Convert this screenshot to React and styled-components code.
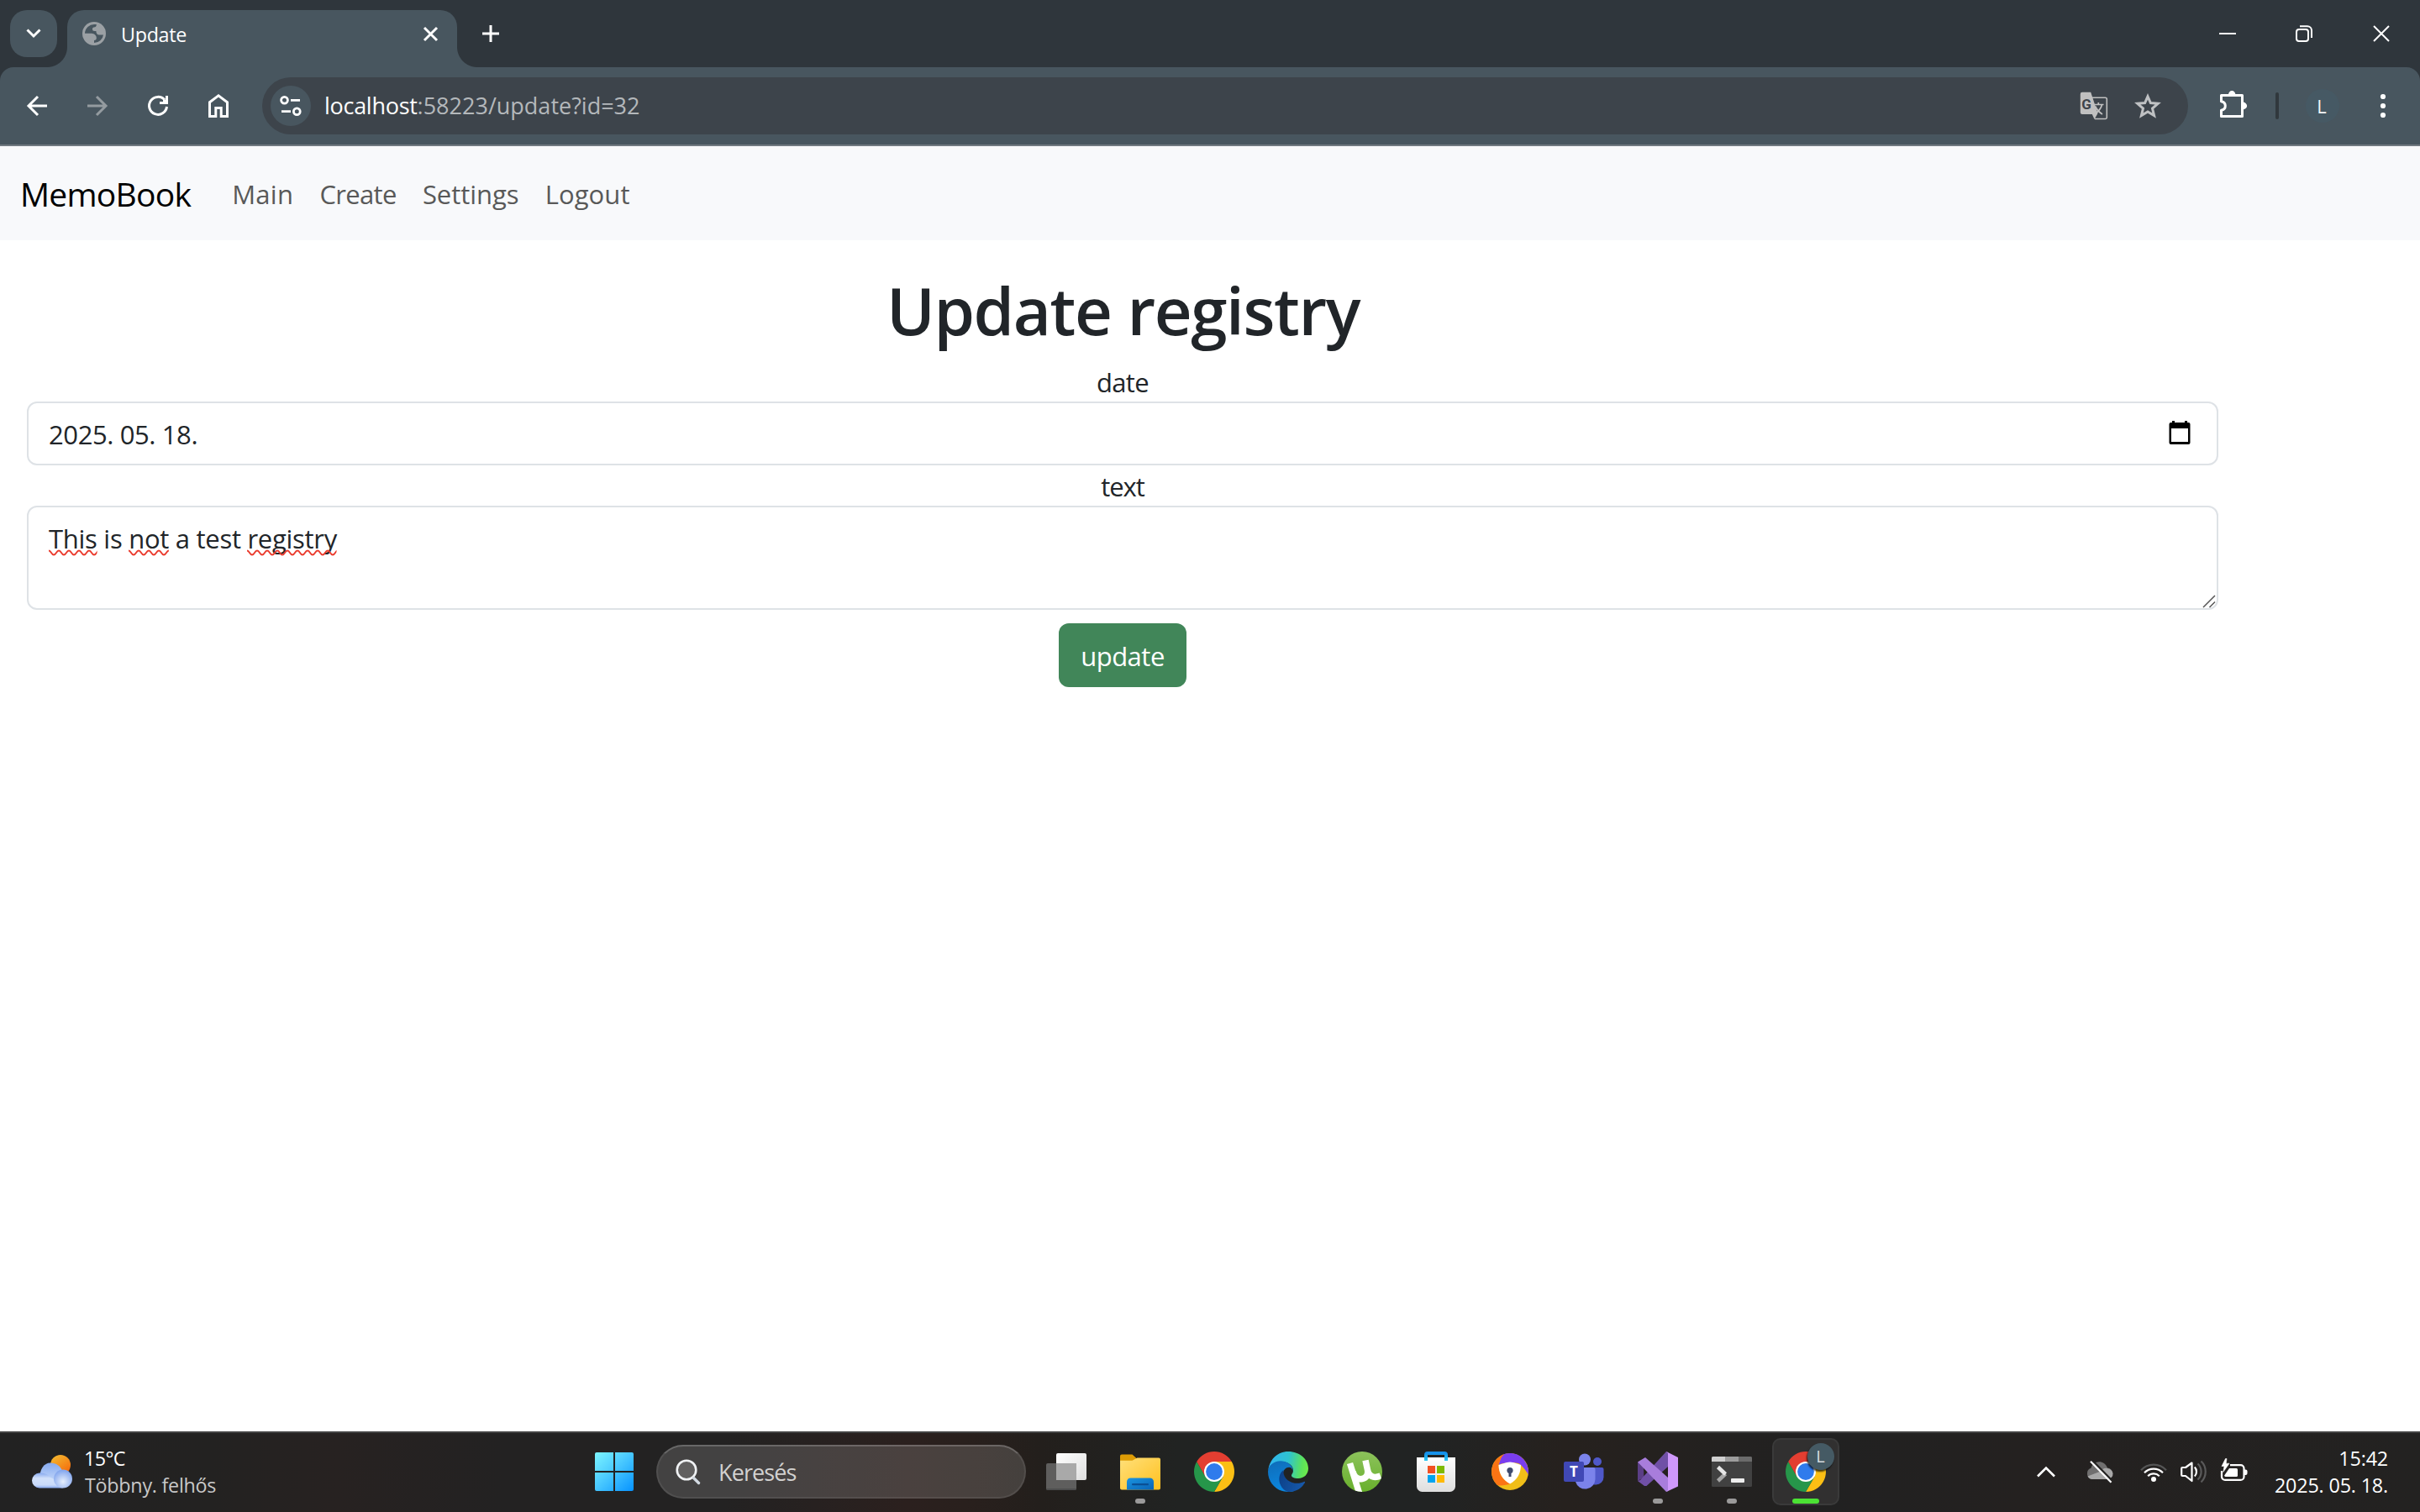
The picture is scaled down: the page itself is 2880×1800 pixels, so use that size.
import React, { useId } from 'react';
import styled, { createGlobalStyle } from 'styled-components';

const GlobalStyle = createGlobalStyle`
  *, *::before, *::after { box-sizing: border-box; }
  html, body { margin: 0; padding: 0; background: #fff; }
  body { font-family: "Open Sans", "Noto Sans", sans-serif; overflow: hidden; }
  svg { display: block; flex: none; overflow: visible; }
  button { font: inherit; border: 0; padding: 0; margin: 0; background: none; color: inherit; }
`;

const Screen = styled.div`
  width: 2880px;
  height: 1800px;
  display: flex;
  flex-direction: column;
  overflow: hidden;
  background: #fff;
`;

/* ---------- browser frame ---------- */

const BrowserFrame = styled.header`
  background: #2f363c;
  flex: none;
`;

const TabStrip = styled.div`
  height: 80px;
  display: flex;
  padding: 12px 0 0 12px;
  color: #fff;
`;

const TabSearch = styled.button`
  && {
    width: 56px;
    height: 56px;
    border-radius: 20px;
    background: #48565f;
    display: flex;
    align-items: center;
    justify-content: center;
  }
`;

const Tab = styled.div`
  position: relative;
  width: 464px;
  height: 68px;
  margin-left: 12px;
  padding: 0 23px 12px 18px;
  border-radius: 20px 20px 0 0;
  background: #48565f;
  display: flex;
  align-items: center;

  &::before,
  &::after {
    content: '';
    position: absolute;
    bottom: 0;
    width: 24px;
    height: 24px;
  }
  &::before {
    left: -24px;
    background: radial-gradient(circle at 0 0, transparent 23.5px, #48565f 24.5px);
  }
  &::after {
    right: -24px;
    background: radial-gradient(circle at 100% 0, transparent 23.5px, #48565f 24.5px);
  }
`;

const TabTitle = styled.span`
  flex: 1;
  margin-left: 18px;
  font-size: 23.3px;
  letter-spacing: -0.3px;
  line-height: 32px;
  padding-top: 2px;
`;

const NewTab = styled.button`
  && {
    width: 56px;
    height: 56px;
    margin-left: 12px;
    display: flex;
    align-items: center;
    justify-content: center;
  }
`;

const WindowControls = styled.div`
  margin: -12px 0 0 auto;
  height: 80px;
  display: flex;
`;

const WindowButton = styled.button`
  width: ${(p) => p.$width || 92}px;
  display: flex;
  align-items: center;
  justify-content: center;
`;

const Toolbar = styled.div`
  height: 94px;
  border-radius: 16px 16px 0 0;
  border-bottom: 2px solid #707980;
  background: #48565f;
  color: #fff;
  display: flex;
  align-items: center;
  padding-left: 8px;
`;

const ToolButton = styled.button`
  && {
    width: 72px;
    height: 72px;
    display: flex;
    align-items: center;
    justify-content: center;
    color: ${(p) => (p.$disabled ? '#949ba0' : '#fff')};
  }
`;

const Omnibox = styled.div`
  width: 2292px;
  height: 68px;
  margin-left: 16px;
  padding: 0 32px 0 10px;
  border-radius: 34px;
  background: #3d444b;
  display: flex;
  align-items: center;
`;

const SiteInfo = styled.span`
  width: 48px;
  height: 48px;
  border-radius: 50%;
  background: #48565f;
  display: flex;
  align-items: center;
  justify-content: center;
`;

const Address = styled.span`
  flex: 1;
  margin-left: 16px;
  font-size: 27px;
  line-height: 40px;
  color: #b4b8bb;
`;

const Host = styled.span`
  color: #fff;
  letter-spacing: -0.28px;
`;

const OmniActions = styled.div`
  display: flex;
  align-items: center;
  gap: 32px;
`;

const ToolDivider = styled.i`
  width: 4px;
  height: 32px;
  border-radius: 2px;
  background: #30383d;
  margin: 0 32px 0 34px;
`;

const Avatar = styled.span`
  width: 40px;
  height: 40px;
  padding-right: 2px;
  border-radius: 50%;
  background: #465964;
  color: #f4f6f7;
  font-size: 22px;
  display: flex;
  align-items: center;
  justify-content: center;
`;

const ChromeActions = styled.div`
  display: flex;
  align-items: center;
  margin-left: 38px;
`;

const ExtensionsButton = styled.span`
  padding-bottom: 4px;
`;

const MenuButton = styled.button`
  && { margin-left: 49px; }
`;

/* ---------- page ---------- */

const Navbar = styled.nav`
  height: 112px;
  flex: none;
  padding: 2px 0 0 24px;
  background: #f8f9fb;
  display: flex;
  align-items: center;
`;

const Brand = styled.a`
  font-size: 39px;
  letter-spacing: -0.75px;
  line-height: 60px;
  color: #000;
  margin-right: 49px;
`;

const NavLinks = styled.div`
  display: flex;
  gap: 31.2px;
`;

const NavLink = styled.a`
  font-size: 31px;
  line-height: 48px;
  letter-spacing: ${(p) => p.$tracking}px;
  color: #595959;
`;

const Page = styled.main`
  flex: 1;
  min-height: 0;
  padding: 32px 240px 0 32px;
  display: flex;
  flex-direction: column;
  align-items: center;
  color: #212529;
`;

const Title = styled.h1`
  margin: 0 0 13px;
  padding: 3px 0 0 1px;
  font-size: 78px;
  font-weight: 600;
  line-height: 96px;
  letter-spacing: -1.4px;
`;

const Label = styled.label`
  padding-top: 1px;
  height: 48px;
  font-size: 31px;
  line-height: 48px;
  letter-spacing: ${(p) => p.$tracking}px;
`;

const Field = styled.div`
  position: relative;
  width: 100%;
  height: ${(p) => p.$height}px;
  padding: 13px 24px 0;
  border: 2px solid #dee2e6;
  border-radius: 12px;
  background: #fff;
  display: flex;
  justify-content: space-between;
  align-items: flex-start;
  font-size: 31px;
  line-height: 48px;
  letter-spacing: ${(p) => p.$tracking}px;
`;

const CalendarSlot = styled.span`
  padding: 8px 7px 0 0;
`;

const Word = styled.span`
  position: relative;
  display: inline-block;
`;

const Squiggle = styled.svg`
  position: absolute;
  left: 0;
  top: 37px;
`;

const ResizeHandle = styled.svg`
  position: absolute;
  right: 2px;
  bottom: 1px;
`;

const SubmitButton = styled.button`
  && {
    width: 152px;
    height: 76px;
    margin-top: 16px;
    padding-top: 1px;
    border-radius: 12px;
    background: #418659;
    color: #fff;
    font-size: 31px;
    line-height: 48px;
    letter-spacing: -0.5px;
  }
`;

/* ---------- taskbar ---------- */

const Taskbar = styled.footer`
  height: 96px;
  flex: none;
  padding-bottom: 2px;
  border-top: 2px solid #434343;
  background: linear-gradient(90deg, #222222 0, #232221 250px, #272221 400px, #232222 600px, #232222 860px, #2b201e 1080px, #29201d 1150px, #231f1c 1240px, #212322 1400px, #212323 1700px, #26211e 1860px, #212121 2180px, #242120 2400px, #232221 2880px);
  display: flex;
  align-items: center;
  color: #fff;
  font-size: 23.3px;
  line-height: 32px;
`;

const Weather = styled.div`
  width: 708px;
  padding-left: 38px;
  display: flex;
  align-items: center;
`;

const WeatherText = styled.div`
  display: flex;
  flex-direction: column;
  margin: 0 0 0 14px;
`;

const Temperature = styled.span`
  letter-spacing: -0.6px;
`;

const Condition = styled.span`
  margin-left: 1px;
  letter-spacing: -0.25px;
  color: #c8c8c8;
`;

const SearchBox = styled.div`
  width: 440px;
  height: 64px;
  margin: 0 4px 0 27px;
  padding-left: 21px;
  border: 2px solid rgba(255, 255, 255, 0.07);
  border-top-color: rgba(255, 255, 255, 0.2);
  border-radius: 32px;
  background: rgba(255, 255, 255, 0.15);
  display: flex;
  align-items: center;
  gap: 21px;
  font-size: 27px;
  letter-spacing: -0.9px;
  color: #d2d1d0;
`;

const SearchLabel = styled.span`
  padding-top: 2px;
`;

const AppList = styled.div`
  display: flex;
`;

const AppCell = styled.div`
  position: relative;
  width: 88px;
  height: 92px;
  display: flex;
  align-items: center;
  justify-content: center;
`;

const ActiveTile = styled.div`
  width: 80px;
  height: 80px;
  border: 2px solid #3a3a3a;
  border-radius: 10px;
  background: #313030;
  display: flex;
  align-items: center;
  justify-content: center;
`;

const RunMark = styled.i`
  position: absolute;
  bottom: 8px;
  left: 50%;
  transform: translateX(-50%);
  width: ${(p) => (p.$active ? 32 : 12)}px;
  height: 6px;
  border-radius: 3px;
  background: ${(p) => (p.$active ? '#4be234' : '#9b9a9a')};
`;

const Badge = styled.span`
  position: absolute;
  top: 12px;
  right: 10px;
  width: 32px;
  height: 32px;
  padding-right: 1px;
  border-radius: 50%;
  background: #455a64;
  box-shadow: -1px 2px 2px rgba(0, 0, 0, 0.7);
  color: #d5dade;
  font-size: 20px;
  display: flex;
  align-items: center;
  justify-content: center;
`;

const Tray = styled.div`
  flex: 1;
  padding: 0 38px 0 231px;
  display: flex;
  align-items: center;
`;

const TrayIcons = styled.div`
  display: flex;
  align-items: center;
  gap: 16px;
  margin-left: ${(p) => p.$offset}px;
`;

const Clock = styled.div`
  margin: 0 0 0 auto;
  display: flex;
  flex-direction: column;
  align-items: flex-end;
  letter-spacing: -0.15px;
`;

/* ---------- icons ---------- */

const ChevronDown = () => (
  <svg width="18" height="12" viewBox="0 0 18 12" fill="none" stroke="#fff" strokeWidth="3">
    <path d="M1.500 1.500 9 9l7.500-7.500" />
  </svg>
);

const Globe = () => (
  <svg width="28" height="28" viewBox="0 0 28 28">
    <circle cx="14" cy="14" r="14" fill="#9ba0a4" />
    <path
      fill="#48565f"
      d="M3 13.800A11.100 11.100 0 0 1 14.500 3H16.800C16.800 5.600 15.600 6.400 13.800 6.400C12.400 6.600 12 7.600 12 8.800C12 10.400 13 10.900 14.400 10.900H16.400C16.400 13.600 17.600 15.400 20 15.400H25A11.100 11.100 0 0 1 14 25V22C16 22 16.800 20.600 16.800 19.200C16.800 16.200 14.400 14 11 13.800Z"
    />
  </svg>
);

const Cross = ({ size, width }) => (
  <svg width={size} height={size} viewBox={`0 0 ${size} ${size}`} fill="none" stroke="#fff" strokeWidth={width}>
    <path d={`M1 1 ${size - 1} ${size - 1}M${size - 1} 1 1 ${size - 1}`} />
  </svg>
);

const Plus = () => (
  <svg width="20" height="20" viewBox="0 0 20 20" stroke="#fff" strokeWidth="3">
    <path d="M10 0v20M0 10h20" />
  </svg>
);

const Minimise = () => (
  <svg width="20" height="20" viewBox="0 0 20 20" stroke="#fff" strokeWidth="2">
    <path d="M0 10h20" />
  </svg>
);

const Restore = () => (
  <svg width="20" height="20" viewBox="0 0 20 20" fill="none" stroke="#fff" strokeWidth="2">
    <rect x="1" y="5" width="14" height="14" rx="3" />
    <path d="M5 1.200h9a5 5 0 0 1 5 5V15" />
  </svg>
);

const ArrowLeft = ({ flip }) => (
  <svg width="24" height="24" viewBox="0 0 24 24" fill="none" stroke="currentColor" strokeWidth="3">
    <g transform={flip ? 'matrix(-1 0 0 1 24 0)' : undefined}>
      <path d="M24 12H2M13 1 2 12l11 11" />
    </g>
  </svg>
);

const Reload = () => (
  <svg width="24" height="24" viewBox="0 0 24 24" fill="none" stroke="#fff" strokeWidth="3">
    <path d="M20 5A10.500 10.500 0 1 0 22.500 13" />
    <path d="M22.500 0v8.500H14" />
    <path d="M18 5h4v4h-4z" fill="#fff" stroke="none" />
  </svg>
);

const Home = () => (
  <svg width="24" height="28" viewBox="0 0 24 28" fill="none" stroke="#fff" strokeWidth="3">
    <path d="M1.500 9.800 12 1.800l10.500 8V26.500h-7.300V16.500H8.800v10H1.500z" />
  </svg>
);

const Tune = () => (
  <svg width="26" height="26" viewBox="0 0 26 26" fill="none" stroke="#fff" strokeWidth="2.800">
    <circle cx="5.500" cy="6.300" r="3.900" />
    <path d="M13 6.300h11M2 19.700h11" />
    <circle cx="20.300" cy="19.700" r="3.900" />
  </svg>
);

const Translate = () => (
  <svg width="33" height="34" viewBox="0 0 33 34">
    <path d="M14 7.300h16.500a1.800 1.800 0 0 1 1.800 1.800v21.600a1.800 1.800 0 0 1-1.800 1.800H18" fill="none" stroke="#c0c0c0" strokeWidth="1.600" />
    <path d="M3 .8h10.200L21.500 26 17.500 33 14.800 27H3a2.200 2.200 0 0 1-2.200-2.200V3A2.200 2.200 0 0 1 3 .8z" fill="#c0c0c0" />
    <path d="M16.500 15.500H28.500M22.300 13v2.500M26.500 15.500C25.500 20 22 24 18 26.500M18.500 17.500c2 4 4.500 7 8.500 9.500" fill="none" stroke="#c0c0c0" strokeWidth="1.700" />
    <text x="2.300" y="20.500" fontFamily="Roboto, sans-serif" fontWeight="700" fontSize="17" fill="#3d444b">G</text>
  </svg>
);

const Star = () => (
  <svg width="32" height="30" viewBox="0 0 32 30" fill="none" stroke="#bfc1c3" strokeWidth="3">
    <path d="M16 3.800 19.400 11.600 28.200 12.300 21.500 18 23.600 26.600 16 22 8.400 26.600 10.500 18 3.800 12.300 12.600 11.600z" />
  </svg>
);

const Puzzle = () => (
  <svg width="32" height="32" viewBox="0 0 32 32">
    <path
      d="M1.500 30.500V23.300c3-.6 4.800-2.600 4.800-5.300s-1.800-4.700-4.800-5.300V5.500h25v25z"
      fill="none"
      stroke="#fff"
      strokeWidth="3"
      strokeLinejoin="round"
    />
    <path d="M10 5a4.200 5 0 0 1 8.400 0zM27 13.600a5 4.300 0 0 1 0 8.800z" fill="#fff" />
  </svg>
);

const MenuDots = () => (
  <svg width="6" height="28" viewBox="0 0 6 28" fill="#fff">
    <circle cx="3" cy="3" r="3.100" />
    <circle cx="3" cy="14" r="3.100" />
    <circle cx="3" cy="25" r="3.100" />
  </svg>
);

const Calendar = () => (
  <svg width="26" height="28" viewBox="0 0 26 28">
    <path d="M4 0h3v2h12V0h3v2h1.500A2 2 0 0 1 25.500 4v22a2 2 0 0 1-2 2h-21a2 2 0 0 1-2-2V4A2 2 0 0 1 2.500 2H4z" fill="#000" />
    <path d="M3 9h20v16H3z" fill="#fff" />
  </svg>
);

const WeatherIcon = () => (
  <svg width="48" height="40" viewBox="0 0 48 40">
    <defs>
      <linearGradient id="sun" x1="0" y1="0" x2=".7" y2="1">
        <stop offset="0" stopColor="#f3c033" />
        <stop offset="1" stopColor="#f56b0c" />
      </linearGradient>
      <linearGradient id="cloudBack" x1="0" y1="0" x2="0" y2="1">
        <stop offset="0" stopColor="#86aaf0" />
        <stop offset="1" stopColor="#c9dcfa" />
      </linearGradient>
      <radialGradient id="cloudFront" cx=".5" cy=".65" r=".6">
        <stop offset="0" stopColor="#e6effd" />
        <stop offset="1" stopColor="#86a8ee" />
      </radialGradient>
      <linearGradient id="cloudBase" x1="0" y1="0" x2="0" y2="1">
        <stop offset="0" stopColor="#86a8ee" />
        <stop offset=".35" stopColor="#d2e1fa" />
        <stop offset=".8" stopColor="#c9dafa" />
        <stop offset="1" stopColor="#86a8ee" />
      </linearGradient>
    </defs>
    <circle cx="34" cy="12" r="12" fill="url(#sun)" />
    <path d="M9 30C9 17 14 9.500 22 9.500C29 9.500 34 13.500 36 19L38 34H9z" fill="url(#cloudBack)" />
    <path d="M9 39.500a9 9 0 0 1 0-18C14 21.500 18 22.500 21 26L28 30L37 39.500z" fill="url(#cloudBase)" />
    <circle cx="37" cy="28.500" r="11" fill="url(#cloudFront)" />
  </svg>
);

const StartLogo = () => (
  <svg width="46" height="46" viewBox="0 0 46 46">
    <defs>
      <linearGradient id="start" x1="0" y1="0" x2="46" y2="46" gradientUnits="userSpaceOnUse">
        <stop offset="0" stopColor="#7cf5ff" />
        <stop offset=".45" stopColor="#4ccbff" />
        <stop offset="1" stopColor="#0793ff" />
      </linearGradient>
    </defs>
    <path fill="url(#start)" d="M2 0h20v22H0V2a2 2 0 0 1 2-2zM24 0h20a2 2 0 0 1 2 2v20H24zM0 24h22v22H2a2 2 0 0 1-2-2zM24 24h22v20a2 2 0 0 1-2 2H24z" />
  </svg>
);

const SearchIcon = () => (
  <svg width="30" height="32" viewBox="0 0 30 32" fill="none">
    <circle cx="13" cy="14" r="11.300" fill="#616060" stroke="#f0f2f4" strokeWidth="2.600" />
    <path d="m21.500 23.500 6 6" stroke="#d3dae2" strokeWidth="3.400" strokeLinecap="round" />
  </svg>
);

const TaskViewIcon = () => (
  <svg width="48" height="44" viewBox="0 0 48 44">
    <defs>
      <linearGradient id="tv" x1="0" y1="0" x2="1" y2="1">
        <stop offset="0" stopColor="#fff" />
        <stop offset="1" stopColor="#dedede" />
      </linearGradient>
    </defs>
    <rect x="12" y="0" width="36" height="32" rx="2" fill="url(#tv)" />
    <rect x="0" y="12" width="36" height="32" rx="2" fill="#6e6e6e" opacity=".8" />
    <path d="M12 12h24v20H12z" fill="#a9a9a9" />
    <path d="M0 42h36a2 2 0 0 1-2 2H2a2 2 0 0 1-2-2z" fill="#4e4e4e" />
  </svg>
);

const ExplorerIcon = () => (
  <svg width="48" height="44" viewBox="0 0 48 44">
    <defs>
      <linearGradient id="folder" x1="0" y1="0" x2="1" y2="1">
        <stop offset="0" stopColor="#ffe07a" />
        <stop offset="1" stopColor="#ffc01f" />
      </linearGradient>
      <linearGradient id="drawer" x1="0" y1="0" x2="1" y2="1">
        <stop offset="0" stopColor="#1a95e0" />
        <stop offset="1" stopColor="#0a63b5" />
      </linearGradient>
    </defs>
    <path d="M0 3.500A2 2 0 0 1 2 1.500h12.500L20 6.500V16H0z" fill="#dd9c05" />
    <path d="M0 8.800h14.500l6-3.300H46a2 2 0 0 1 2 2V41.500a2 2 0 0 1-2 2H2a2 2 0 0 1-2-2z" fill="url(#folder)" />
    <path d="M8 43.500V34a4.500 4.500 0 0 1 4.500-4.500h23A4.500 4.500 0 0 1 40 34v9.500z" fill="url(#drawer)" />
    <rect x="14" y="36" width="20" height="2.200" rx="1" fill="#0a4f94" />
  </svg>
);

const ChromeIcon = () => (
  <svg width="48" height="48" viewBox="0 0 48 48">
    <path d="M24 12h20.780A24 24 0 0 1 24 48l10.390-18L24 24z" fill="#fbbf14" />
    <path d="M34.390 30 24 48A24 24 0 0 1 3.220 12L13.610 30 24 24z" fill="#26964a" />
    <path d="M13.610 30 3.220 12a24 24 0 0 1 41.560 0H24v12z" fill="#e33e31" />
    <circle cx="24" cy="24" r="12" fill="#fff" />
    <circle cx="24" cy="24" r="9.900" fill="#2f7bec" />
  </svg>
);

const EdgeIcon = () => (
  <svg width="48" height="48" viewBox="0 0 48 48">
    <defs>
      <linearGradient id="edgeTop" x1="0" y1=".3" x2="1" y2=".4">
        <stop offset="0" stopColor="#2fb4f2" />
        <stop offset=".5" stopColor="#2fc3cf" />
        <stop offset=".85" stopColor="#5ae25e" />
        <stop offset="1" stopColor="#6cea4b" />
      </linearGradient>
      <linearGradient id="edgeMid" x1="0" y1="0" x2=".3" y2="1">
        <stop offset="0" stopColor="#0f6cb8" />
        <stop offset="1" stopColor="#0b86de" />
      </linearGradient>
      <linearGradient id="edgeLow" x1="0" y1="0" x2="1" y2=".3">
        <stop offset="0" stopColor="#0b3f86" />
        <stop offset="1" stopColor="#1657a8" />
      </linearGradient>
    </defs>
    <path d="M.3 22C2 9 12 0 24 0c14 0 24 9.500 24 20 0 7-5 12-12 12-5 0-8-1.500-8-3.500 0-1.500 2-2.500 2-6C30 15 22 12 15 12 8 12 2.500 16 .3 22z" fill="url(#edgeTop)" />
    <path d="M29.500 24C30.500 16 22 11.300 15 11.300 7 11.300 0 17 0 24c0 13.500 10.500 24 24 24 3 0 6-.5 8-1.500L20 36 17.500 27.500C18 22 21.500 18.800 25 18.800c2.800 0 4.500 2 4.500 5.200z" fill="url(#edgeMid)" />
    <path d="M18.500 22C10 28 12 44 24 48c10 .5 16.500-5 20-11 .3-1-.4-1.500-1.200-1-10 5-26-1-24.300-14z" fill="url(#edgeLow)" />
  </svg>
);

const TorrentIcon = () => (
  <svg width="48" height="48" viewBox="0 0 48 48">
    <defs>
      <linearGradient id="ut" x1="0" y1="0" x2="0" y2="1">
        <stop offset="0" stopColor="#8cc25b" />
        <stop offset="1" stopColor="#68b02c" />
      </linearGradient>
      <clipPath id="utClip"><circle cx="24" cy="24" r="24" /></clipPath>
    </defs>
    <circle cx="24" cy="24" r="24" fill="url(#ut)" />
    <g clipPath="url(#utClip)">
      <path
        d="M9.500 14 20.500 49M13 24C15 31 19 33.500 24 32.500 29 31.500 31.500 28 30.500 22L28 10.500M30.500 22C31.500 29 37 32.500 46 29"
        fill="none"
        stroke="#fff"
        strokeWidth="7.500"
      />
    </g>
  </svg>
);

const StoreIcon = () => (
  <svg width="48" height="48" viewBox="0 0 48 48">
    <defs>
      <linearGradient id="bag" x1="0" y1="0" x2="0" y2="1">
        <stop offset="0" stopColor="#fff" />
        <stop offset="1" stopColor="#dedede" />
      </linearGradient>
      <linearGradient id="handle" x1="0" y1="0" x2="0" y2="1">
        <stop offset="0" stopColor="#1590ea" />
        <stop offset="1" stopColor="#27c8f2" />
      </linearGradient>
    </defs>
    <path d="M1 7h46v34.500a6.500 6.500 0 0 1-6.500 6.500h-33A6.500 6.500 0 0 1 1 41.500z" fill="url(#bag)" />
    <path d="M12 11V4a2 2 0 0 1 2-2h20a2 2 0 0 1 2 2v7" fill="none" stroke="url(#handle)" strokeWidth="4" />
    <path d="M14 17h9v9h-9z" fill="#f25022" />
    <path d="M25 17h9v9h-9z" fill="#7fba00" />
    <path d="M14 28h9v9h-9z" fill="#00a4ef" />
    <path d="M25 28h9v9h-9z" fill="#ffb900" />
  </svg>
);

const AvastIcon = () => (
  <svg width="44" height="44" viewBox="0 0 44 44">
    <circle cx="22" cy="22" r="22" fill="#f0be18" />
    <path d="M43.700 25.500A22 22 0 0 0 12 2.400L8.500 14C13 11 31 9 35 14C39 18 42 22 43.700 25.500z" fill="#7a3df0" />
    <path d="M15 1.200A22 22 0 0 0 6.500 37.500C9 39.500 18 38 22.500 36.500C13 32 8.500 24 8.500 14C10 8 12 4 15 1.200z" fill="#fb7414" />
    <path d="M8.500 14C13 12.500 17 11 22 10.500c5 .5 9 2 13 3.500 0 9-4 18-13 22.500C13 32 8.500 23 8.500 14z" fill="#fff" />
    <circle cx="22" cy="20.500" r="3.600" fill="#3e4a6d" />
    <path d="M20.500 21h3v7h-3z" fill="#3e4a6d" />
  </svg>
);

const TeamsIcon = () => (
  <svg width="48" height="44" viewBox="0 0 48 44">
    <circle cx="40" cy="10" r="5" fill="#4f58c9" />
    <path d="M34 17h11.500a2 2 0 0 1 2 2v9.500a9 9 0 0 1-9 9H34z" fill="#4f58c9" />
    <circle cx="25" cy="7.500" r="7" fill="#7b83eb" />
    <path d="M14 17h21.500a2 2 0 0 1 2 2v12a12 12 0 0 1-23.500 3z" fill="#7b83eb" />
    <rect x="0" y="10" width="24" height="24" rx="2" fill="#4048b5" />
    <text x="12" y="28" textAnchor="middle" fontFamily="Open Sans, sans-serif" fontWeight="700" fontSize="17" fill="#fff">T</text>
  </svg>
);

const VisualStudioIcon = () => (
  <svg width="48" height="48" viewBox="0 0 48 48">
    <path d="M0 12.500 7 16 7.300 31 0 35z" fill="#5b3e86" />
    <path d="M34 0 36 1v17L10.500 41H8L0 35 3 34z" fill="#7050a6" />
    <path d="M0 12.500 9 7 36 31v16l-2 1z" fill="#a87ddc" />
    <path d="M34 0 48 7v34.500L34 48l2-2V2z" fill="#cf98fb" />
  </svg>
);

const TerminalIcon = () => (
  <svg width="48" height="36" viewBox="0 0 48 36">
    <rect width="48" height="36" rx="1.500" fill="#414141" />
    <path d="M1.500 0H16v6H0V1.500A1.500 1.500 0 0 1 1.500 0z" fill="#cfcfcf" />
    <path d="M16 0h16v6H16z" fill="#9c9c9c" />
    <path d="M32 0h14.500A1.500 1.500 0 0 1 48 1.500V6H32z" fill="#6b6b6b" />
    <path d="m7.500 29 9-8.500" stroke="#a5a5a5" strokeWidth="4.500" fill="none" />
    <path d="m7.500 12.500 9 8.500" stroke="#e6e6e6" strokeWidth="4.500" fill="none" />
    <rect x="23" y="26" width="16" height="5" rx="1" fill="#ededed" />
  </svg>
);

const ChevronUp = () => (
  <svg width="22" height="14" viewBox="0 0 22 14" fill="none" stroke="#fff" strokeWidth="2.600">
    <path d="m1 12.500 10-10 10 10" />
  </svg>
);

const CloudOff = () => (
  <svg width="32" height="26" viewBox="0 0 32 26">
    <path d="M7 22A6.800 6.800 0 0 1 5.500 8.800C8 -.5 21-2 25 8.500A6.800 6.800 0 0 1 25.500 22z" fill="#706f6f" />
    <path d="M1.500 18.500 17 12.500a8 8 0 0 1 14.500 2.500 6.500 6.500 0 0 1-6 7H7a7 7 0 0 1-5.500-3.500z" fill="#a8a8a8" />
    <path d="m7.500 0 23 23.500" stroke="#232221" strokeWidth="2.200" />
    <path d="m5 .8 24.500 25" stroke="#fff" strokeWidth="2.200" />
  </svg>
);

const Wifi = () => (
  <svg width="32" height="26" viewBox="0 0 32 26" fill="none" strokeWidth="2.200">
    <path d="M1 11.200a20.500 20.500 0 0 1 30 0" stroke="#555" />
    <path d="M5 14.200a15.500 15.500 0 0 1 22 0M9.200 18.200a9.700 9.700 0 0 1 13.600 0" stroke="#fff" />
    <circle cx="16" cy="22" r="3" fill="#fff" />
  </svg>
);

const Volume = () => (
  <svg width="32" height="28" viewBox="0 0 32 28" fill="none" strokeWidth="2.200">
    <path d="M1.200 10v8a1 1 0 0 0 1 1H6l7.500 6V3.500L6 9H2.200a1 1 0 0 0-1 1z" stroke="#fff" strokeLinejoin="round" />
    <path d="M16.800 8.500a8 8 0 0 1 0 11" stroke="#fff" />
    <path d="M20.500 4.500a13 13 0 0 1 0 19M24.500 1.500a17.500 17.500 0 0 1 0 25" stroke="#5a5a5a" />
  </svg>
);

const Battery = () => (
  <svg width="32" height="30" viewBox="0 0 32 30">
    <path d="M11 7.100h12.500a4 4 0 0 1 4 4v9.800a4 4 0 0 1-4 4H5a4 4 0 0 1-4-4V14" fill="none" stroke="#fff" strokeWidth="2.200" />
    <path d="M10 11h8.500a1.500 1.500 0 0 1 1.500 1.500v7A1.500 1.500 0 0 1 18.500 21H5.500A1.500 1.500 0 0 1 4.200 19.500z" fill="#fff" />
    <path d="M28 12.500h1.500a2 2 0 0 1 2 2V17a2 2 0 0 1-2 2H28z" fill="#fff" />
    <path d="M5.500-.5 1 8.500H4L2.800 15.500 10 5.200H6.200L7-.5z" fill="#fff" stroke="#fff" strokeWidth=".6" />
  </svg>
);

/* ---------- composition ---------- */

function Misspelled({ children }) {
  const id = useId();
  return (
    <Word>
      {children}
      <Squiggle width="100%" height="8">
        <defs>
          <pattern id={id} width="12" height="8" patternUnits="userSpaceOnUse">
            <path d="M-12 1.500C-9 1.500-9 6.500-6 6.500C-3 6.500-3 1.500 0 1.500S3 6.500 6 6.500 9 1.500 12 1.500 15 6.500 18 6.500" fill="none" stroke="#ea3a2c" strokeWidth="1.900" />
          </pattern>
        </defs>
        <rect width="100%" height="8" fill={`url(#${id})`} />
      </Squiggle>
    </Word>
  );
}

const apps = [
  { icon: TaskViewIcon },
  { icon: ExplorerIcon, running: true },
  { icon: ChromeIcon },
  { icon: EdgeIcon },
  { icon: TorrentIcon },
  { icon: StoreIcon },
  { icon: AvastIcon },
  { icon: TeamsIcon },
  { icon: VisualStudioIcon, running: true },
  { icon: TerminalIcon, running: true },
];

const links = [
  { label: 'Main', tracking: 0.3 },
  { label: 'Create', tracking: -0.68 },
  { label: 'Settings', tracking: -0.05 },
  { label: 'Logout', tracking: 0.1 },
];

export default function App() {
  return (
    <Screen>
      <GlobalStyle />
      <BrowserFrame>
        <TabStrip>
          <TabSearch><ChevronDown /></TabSearch>
          <Tab>
            <Globe />
            <TabTitle>Update</TabTitle>
            <Cross size={17} width={3} />
          </Tab>
          <NewTab><Plus /></NewTab>
          <WindowControls>
            <WindowButton><Minimise /></WindowButton>
            <WindowButton $width={90}><Restore /></WindowButton>
            <WindowButton $width={93}><Cross size={20} width={2} /></WindowButton>
          </WindowControls>
        </TabStrip>
        <Toolbar>
          <ToolButton><ArrowLeft /></ToolButton>
          <ToolButton $disabled><ArrowLeft flip /></ToolButton>
          <ToolButton><Reload /></ToolButton>
          <ToolButton><Home /></ToolButton>
          <Omnibox>
            <SiteInfo><Tune /></SiteInfo>
            <Address><Host>localhost</Host>:58223/update?id=32</Address>
            <OmniActions>
              <Translate />
              <Star />
            </OmniActions>
          </Omnibox>
          <ChromeActions>
            <ExtensionsButton><Puzzle /></ExtensionsButton>
            <ToolDivider />
            <Avatar>L</Avatar>
            <MenuButton><MenuDots /></MenuButton>
          </ChromeActions>
        </Toolbar>
      </BrowserFrame>

      <Navbar>
        <Brand>MemoBook</Brand>
        <NavLinks>
          {links.map((l) => (
            <NavLink key={l.label} $tracking={l.tracking}>{l.label}</NavLink>
          ))}
        </NavLinks>
      </Navbar>

      <Page>
        <Title>Update registry</Title>
        <Label $tracking={-0.6}>date</Label>
        <Field $height={76} $tracking={-0.4}>
          <span>2025. 05. 18.</span>
          <CalendarSlot><Calendar /></CalendarSlot>
        </Field>
        <Label $tracking={-1}>text</Label>
        <Field $height={124} $tracking={-0.28}>
          <span>
            <Misspelled>This</Misspelled> is <Misspelled>not</Misspelled> a test <Misspelled>registry</Misspelled>
          </span>
          <ResizeHandle width="14" height="14" viewBox="0 0 14 14" stroke="#555" strokeWidth="1.500">
            <path d="M0 14 14 0M7.500 14 14 7.500" />
          </ResizeHandle>
        </Field>
        <SubmitButton>update</SubmitButton>
      </Page>

      <Taskbar>
        <Weather>
          <WeatherIcon />
          <WeatherText>
            <Temperature>15°C</Temperature>
            <Condition>Többny. felhős</Condition>
          </WeatherText>
        </Weather>
        <StartLogo />
        <SearchBox>
          <SearchIcon />
          <SearchLabel>Keresés</SearchLabel>
        </SearchBox>
        <AppList>
          {apps.map(({ icon: Icon, running }, i) => (
            <AppCell key={i}>
              <Icon />
              {running && <RunMark />}
            </AppCell>
          ))}
          <AppCell>
            <ActiveTile><ChromeIcon /></ActiveTile>
            <Badge>L</Badge>
            <RunMark $active />
          </AppCell>
        </AppList>
        <Tray>
          <ChevronUp />
          <TrayIcons $offset={37}><CloudOff /></TrayIcons>
          <TrayIcons $offset={32}>
            <Wifi />
            <Volume />
            <Battery />
          </TrayIcons>
          <Clock>
            <span>15:42</span>
            <span>2025. 05. 18.</span>
          </Clock>
        </Tray>
      </Taskbar>
    </Screen>
  );
}
